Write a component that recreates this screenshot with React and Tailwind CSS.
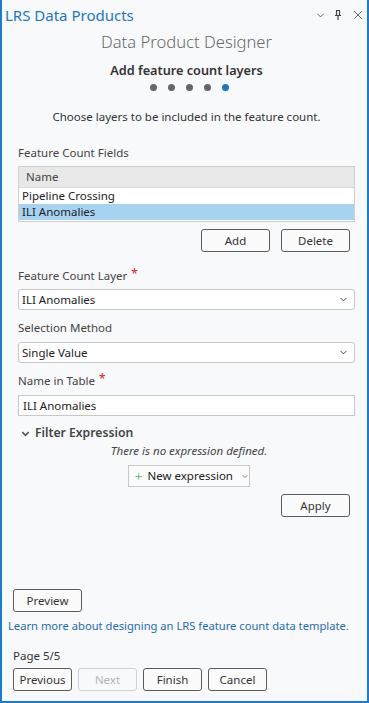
import { ChevronDown, X, Plus } from "lucide-react";

function Btn({ children, className = "", disabled = false }) {
  return (
    <button
      className={
        "h-[23px] rounded-[3px] border text-[11.5px] leading-none " +
        (disabled
          ? "border-[#d0d0d0] text-[#b5b5b5] bg-[#f8f9fa] "
          : "border-[#5a5a5a] text-[#333] bg-[#fbfbfb] ") +
        className
      }
    >
      {children}
    </button>
  );
}

function Select({ value, className = "" }) {
  return (
    <div
      className={
        "flex h-[21px] items-center justify-between rounded-[3px] border border-[#c8c8c8] bg-white pl-[3px] pr-[5px] text-[11.5px] text-[#222] " +
        className
      }
    >
      <span>{value}</span>
      <ChevronDown size={11} strokeWidth={2} className="text-[#333]" />
    </div>
  );
}

function Label({ children, required, className = "" }) {
  return (
    <div className={"flex items-start text-[11.5px] leading-[16px] text-[#444] " + className}>
      {children}
      {required && <span className="ml-[4px] -mt-[2px] text-[12px] leading-[16px] text-[#e02020]">*</span>}
    </div>
  );
}

export default function App() {
  return (
    <div
      className="flex h-[703px] w-[369px] flex-col border-x-2 border-b-2 border-[#1a7bd0] bg-[#f8f9fa]"
      style={{ fontFamily: '"Segoe UI", "Noto Sans", "Open Sans", sans-serif' }}
    >
      <div className="flex h-[30px] shrink-0 items-center justify-between pl-[3px] pr-[2px]">
        <span className="text-[15px] text-[#1b76c6]">LRS Data Products</span>
        <div className="flex items-center text-[#555]">
          <ChevronDown size={11} strokeWidth={2} className="mr-[6px]" />
          <svg width="12" height="12" viewBox="0 0 12 12" fill="none" stroke="#444" strokeWidth="1.2" className="mr-[7px]">
            <path d="M4 1.5h4M4.5 1.5v5M7.5 1.5v5M3 6.5h6M6 6.5v4.5" />
          </svg>
          <X size={14} strokeWidth={1.5} />
        </div>
      </div>

      <div className="flex flex-col pl-[16px] pr-[12px]">
        <div className="text-center text-[16.6px] font-light leading-[24px] text-[#6a6a6a]">
          Data Product Designer
        </div>
        <div className="mt-[7px] text-center text-[12.7px] font-semibold leading-[18px] text-[#333]">
          Add feature count layers
        </div>
        <div className="mt-[5px] flex justify-center gap-[11px] pl-[5px]">
          <span className="h-[7px] w-[7px] rounded-full bg-[#666]" />
          <span className="h-[7px] w-[7px] rounded-full bg-[#666]" />
          <span className="h-[7px] w-[7px] rounded-full bg-[#666]" />
          <span className="h-[7px] w-[7px] rounded-full bg-[#666]" />
          <span className="h-[7px] w-[7px] rounded-full bg-[#1b76c6]" />
        </div>
        <div className="mt-[18px] text-center text-[11.5px] leading-[16px] text-[#333]">
          Choose layers to be included in the feature count.
        </div>

        <Label className="mt-[20px]">Feature Count Fields</Label>
        <div className="mt-[5px] h-[56px] border border-[#d0d0d0] bg-white text-[11.5px] text-[#222]">
          <div className="flex h-[21px] items-center border-b border-[#d8d8d8] bg-[#e8e8e8] pl-[7px] text-[#444]">
            Name
          </div>
          <div className="flex h-[16px] items-center pl-[3px]">Pipeline Crossing</div>
          <div className="flex h-[16px] items-center bg-[#a6d3f2] pl-[3px]">ILI Anomalies</div>
        </div>
        <div className="mt-[7px] flex justify-end gap-[11px] pr-[5px]">
          <Btn className="w-[69px]">Add</Btn>
          <Btn className="w-[69px]">Delete</Btn>
        </div>

        <Label required className="mt-[16px]">
          Feature Count Layer
        </Label>
        <Select value="ILI Anomalies" className="mt-[5px]" />
        <Label className="mt-[10px]">Selection Method</Label>
        <Select value="Single Value" className="mt-[6px]" />
        <Label required className="mt-[10px]">
          Name in Table
        </Label>
        <div className="mt-[6px] flex h-[21px] items-center border border-[#c8c8c8] bg-white pl-[4px] text-[11.5px] text-[#222]">
          ILI Anomalies
        </div>

        <div className="mt-[8px] flex items-center pl-[3px] text-[12.2px] font-semibold leading-[18px] text-[#444]">
          <svg width="9" height="9" viewBox="0 0 10 10" className="mr-[5px]">
            <path d="M1.5 3.5L5 7l3.5-3.5" fill="none" stroke="#555" strokeWidth="1.8" />
          </svg>
          Filter Expression
        </div>
        <div className="mt-[1px] pl-[5px] text-center text-[11.5px] italic leading-[16px] text-[#444]">
          There is no expression defined.
        </div>
        <div className="mt-[6px] flex justify-center pl-[5px]">
          <div className="flex h-[22px] w-[122px] items-center whitespace-nowrap border border-[#c8c8c8] bg-[#fbfbfb] pl-[5px] text-[11.5px] text-[#222]">
            <Plus size={13} strokeWidth={2} className="mr-[4px] text-[#4caf50]" />
            New expression
            <ChevronDown size={11} strokeWidth={2} className="ml-[8px] text-[#444]" />
          </div>
        </div>
        <div className="mt-[7px] flex justify-end pr-[5px]">
          <Btn className="w-[69px]">Apply</Btn>
        </div>
      </div>

      <div className="flex-1" />

      <div className="pl-[11px]">
        <Btn className="w-[69px]">Preview</Btn>
      </div>
      <div className="mt-[6px] whitespace-nowrap pl-[6px] text-[11.2px] leading-[16px] text-[#1b6db3]">
        Learn more about designing an LRS feature count data template.
      </div>
      <div className="mt-[14px] pl-[11px] text-[11.5px] leading-[16px] text-[#333]">Page 5/5</div>
      <div className="mb-[10px] mt-[4px] flex gap-[6px] pl-[11px]">
        <Btn className="w-[59px]">Previous</Btn>
        <Btn className="w-[59px]" disabled>
          Next
        </Btn>
        <Btn className="w-[59px]">Finish</Btn>
        <Btn className="w-[59px]">Cancel</Btn>
      </div>
    </div>
  );
}
